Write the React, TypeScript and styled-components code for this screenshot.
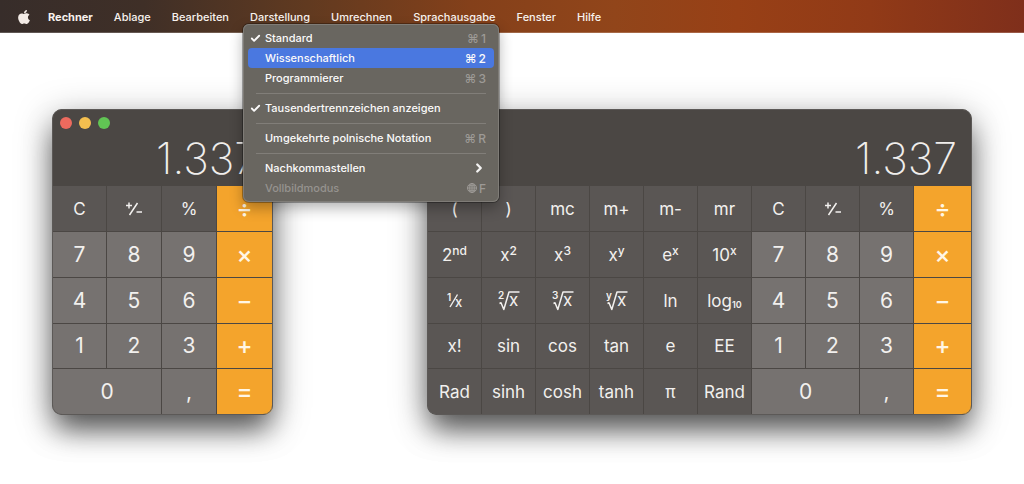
import React from 'react';
import styled, { createGlobalStyle } from 'styled-components';
import { FaApple } from 'react-icons/fa';
import { Check, ChevronRight } from 'lucide-react';

const GlobalStyle = createGlobalStyle`
  * { box-sizing: border-box; }
  body {
    margin: 0;
    background: #fff;
    font-family: Inter, "Liberation Sans", sans-serif;
  }
  button { font-family: inherit; border: 0; margin: 0; padding: 0; }
`;

const MenuBar = styled.nav`
  display: flex;
  align-items: center;
  height: 33px;
  padding-left: 18px;
  background: linear-gradient(90deg, #372d2a 0%, #3f2f27 14%, #613a20 30%, #84401a 46%, #91451a 60%, #984016 72%, #913a17 85%, #7f2f1b 100%);
  box-shadow: inset 0 -1px 0 rgba(255, 255, 255, 0.2);
`;

const BarList = styled.ul`
  display: flex;
  gap: 21px;
  margin: 0 0 0 18px;
  padding: 0;
  list-style: none;
`;

const BarItem = styled.li`
  position: relative;
`;

const BarButton = styled.button<{ $bold?: boolean }>`
  display: block;
  background: none;
  color: #f8f2ee;
  font-size: 11px;
  line-height: 16px;
  font-weight: ${(p) => (p.$bold ? 700 : 500)};
`;

const AppleLogo = styled(FaApple)`
  display: block;
  width: 12px;
  height: 16px;
  color: #f3ebe6;
`;

const Menu = styled.div`
  position: absolute;
  z-index: 2;
  top: 15px;
  left: -7px;
  width: 256px;
  padding: 4px 5px;
  border-radius: 6px;
  background: #696660;
  box-shadow: inset 0 0 0 1px #7f7c77, 0 0 0 1px rgba(0, 0, 0, 0.3), 0 6px 14px rgba(0, 0, 0, 0.3);
`;

const MenuRow = styled.button<{ $active?: boolean }>`
  display: grid;
  grid-template-columns: 17px 1fr auto;
  align-items: center;
  width: 100%;
  height: 20px;
  padding: 1px 8px 0 0;
  border-radius: 4px;
  background: ${(p) => (p.$active ? '#4a78e0' : 'transparent')};
  color: #fbfafa;
  font-size: 11px;
  font-weight: 500;
  line-height: 19px;
  text-align: left;
  &:disabled { color: #96938f; }
`;

const Mark = styled.span`
  display: flex;
  padding-left: 2px;
`;

const Shortcut = styled.span<{ $active?: boolean }>`
  display: flex;
  align-items: center;
  gap: 2px;
  font-size: 12px;
  color: ${(p) => (p.$active ? '#fbfafa' : '#9d9a96')};
`;

const Divider = styled.hr`
  height: 1px;
  margin: 5px 8px 4px;
  border: 0;
  background: #817e79;
`;

const Desktop = styled.main`
  display: grid;
  grid-template-columns: 221fr 545fr;
  gap: 154px;
  padding: 76px 52px 68px;
`;

const Window = styled.section`
  position: relative;
  padding: 1px;
  border-radius: 10px;
  background: #4b4744;
  box-shadow: 0 18px 28px -4px rgba(0, 0, 0, 0.55), 0 8px 36px rgba(0, 0, 0, 0.34);
  overflow: hidden;
  &::after {
    content: '';
    position: absolute;
    inset: 0;
    border: 1px solid rgba(95, 93, 90, 0.85);
    border-radius: 10px;
    pointer-events: none;
  }
`;

const Display = styled.header`
  display: flex;
  flex-direction: column;
  height: 76px;
  padding: 7px 14px 0 7px;
`;

const Lights = styled.div`
  display: flex;
  gap: 7px;
  height: 12px;
`;

const Light = styled.button<{ $color: string }>`
  width: 12px;
  height: 12px;
  border-radius: 50%;
  background: ${(p) => p.$color};
`;

const Value = styled.output`
  color: #f0eeec;
  font-size: 43px;
  line-height: 56px;
  margin-top: 1px;
  font-weight: 200;
  text-align: right;
`;

const Keys = styled.div<{ $wide?: boolean }>`
  display: grid;
  grid-template-columns: ${(p) => (p.$wide ? 'repeat(9, 53fr) 57fr' : '53fr 54fr 54fr 55fr')};
  grid-template-rows: 45px 45px 45px 44px 45px;
  gap: 1px;
`;

type Kind = 'fn' | 'num' | 'op';

const keyColors = { fn: '#5a5654', num: '#767270', op: '#f4a42c' };
const keySizes = { fn: 17, num: 21, op: 24 };

const Key = styled.button<{ $kind: Kind; $double?: boolean }>`
  display: flex;
  align-items: center;
  justify-content: center;
  grid-column: span ${(p) => (p.$double ? 2 : 1)};
  background: ${(p) => keyColors[p.$kind]};
  color: ${(p) => (p.$kind === 'op' ? '#fff6e6' : '#f2f0ee')};
  font-size: ${(p) => keySizes[p.$kind]}px;
  font-weight: ${(p) => (p.$kind === 'op' ? 500 : 400)};
  line-height: 24px;
  white-space: nowrap;
`;

const Sup = styled.sup`
  font-size: 12px;
  font-weight: 500;
  line-height: 12px;
  margin-bottom: 8px;
`;

const Sub = styled.sub`
  font-size: 9px;
  font-weight: 600;
  line-height: 12px;
  margin-top: 8px;
`;

const Sign = styled.svg`
  display: block;
  fill: currentColor;
  font-weight: 600;
  path { fill: none; stroke: currentColor; stroke-linejoin: round; }
`;

const Root = ({ index }: { index: string }) => (
  <Sign width="22" height="22" viewBox="0 0 22 22">
    <text x="0" y="9" fontSize="10">{index}</text>
    <path d="M1.5 13.5 L3 12.8 L5.8 19.5 L11 2 H21.5" strokeWidth="1.5" />
    <text x="11" y="16" fontSize="17" fontWeight="400">x</text>
  </Sign>
);

const Reciprocal = () => (
  <Sign width="18" height="18" viewBox="0 0 18 18">
    <text x="1" y="9" fontSize="10">1</text>
    <path d="M4 15 L11.5 2.5" strokeWidth="1.4" />
    <text x="9" y="15" fontSize="13" fontWeight="500">x</text>
  </Sign>
);

const PlusMinus = () => (
  <Sign width="18" height="18" viewBox="0 0 18 18">
    <path d="M1 5.5 H7 M4 2.5 V8.5 M4.5 15 L12.5 3 M11.5 12 H17" strokeWidth="1.5" />
  </Sign>
);

const GlobeIcon = () => (
  <svg width="10" height="10" viewBox="0 0 20 20" fill="none" stroke="currentColor" strokeWidth="2">
    <circle cx="10" cy="10" r="9" />
    <ellipse cx="10" cy="10" rx="4.5" ry="9" />
    <path d="M10 1 V19 M1 10 H19 M3 5.5 H17 M3 14.5 H17" />
  </svg>
);

interface KeySpec {
  id: string;
  kind: Kind;
  label?: React.ReactNode;
  double?: boolean;
}

const fn = (id: string, label?: React.ReactNode): KeySpec => ({ id, kind: 'fn', label });
const num = (id: string): KeySpec => ({ id, kind: 'num' });
const op = (id: string): KeySpec => ({ id, kind: 'op' });

const basicRows: KeySpec[][] = [
  [fn('C'), fn('plus-minus', <PlusMinus />), fn('%'), op('÷')],
  [num('7'), num('8'), num('9'), op('×')],
  [num('4'), num('5'), num('6'), op('−')],
  [num('1'), num('2'), num('3'), op('+')],
  [{ id: '0', kind: 'num', double: true }, num(','), op('=')],
];

const scienceRows: KeySpec[][] = [
  [fn('('), fn(')'), fn('mc'), fn('m+'), fn('m-'), fn('mr')],
  [
    fn('2nd', <>2<Sup>nd</Sup></>),
    fn('x2', <>x<Sup>2</Sup></>),
    fn('x3', <>x<Sup>3</Sup></>),
    fn('xy', <>x<Sup>y</Sup></>),
    fn('ex', <>e<Sup>x</Sup></>),
    fn('10x', <>10<Sup>x</Sup></>),
  ],
  [
    fn('1/x', <Reciprocal />),
    fn('root2', <Root index="2" />),
    fn('root3', <Root index="3" />),
    fn('rooty', <Root index="y" />),
    fn('ln'),
    fn('log10', <>log<Sub>10</Sub></>),
  ],
  [fn('x!'), fn('sin'), fn('cos'), fn('tan'), fn('e'), fn('EE')],
  [fn('Rad'), fn('sinh'), fn('cosh'), fn('tanh'), fn('π'), fn('Rand')],
];

const Calculator = ({ wide }: { wide?: boolean }) => {
  const rows = wide ? scienceRows.map((row, i) => [...row, ...basicRows[i]]) : basicRows;
  return (
    <Window>
      <Display>
        <Lights>
          {!wide && (
            <>
              <Light $color="#ec6a5e" aria-label="Schließen" />
              <Light $color="#f4bf4f" aria-label="Minimieren" />
              <Light $color="#61c554" aria-label="Zoomen" />
            </>
          )}
        </Lights>
        <Value>1.337</Value>
      </Display>
      <Keys $wide={wide}>
        {rows.flat().map((k) => (
          <Key key={k.id} $kind={k.kind} $double={k.double} aria-label={k.id}>
            {k.label ?? k.id}
          </Key>
        ))}
      </Keys>
    </Window>
  );
};

interface RowProps {
  label: string;
  keys?: React.ReactNode;
  checked?: boolean;
  active?: boolean;
  disabled?: boolean;
}

const Row = ({ label, keys, checked, active, disabled }: RowProps) => (
  <MenuRow $active={active} disabled={disabled}>
    <Mark>{checked && <Check size={11} strokeWidth={4} />}</Mark>
    <span>{label}</span>
    <Shortcut $active={active}>{keys}</Shortcut>
  </MenuRow>
);

const ViewMenu = () => (
  <Menu>
    <Row label="Standard" checked keys={<><span>⌘</span><span>1</span></>} />
    <Row label="Wissenschaftlich" active keys={<><span>⌘</span><span>2</span></>} />
    <Row label="Programmierer" keys={<><span>⌘</span><span>3</span></>} />
    <Divider />
    <Row label="Tausendertrennzeichen anzeigen" checked />
    <Divider />
    <Row label="Umgekehrte polnische Notation" keys={<><span>⌘</span><span>R</span></>} />
    <Divider />
    <Row label="Nachkommastellen" keys={<ChevronRight size={14} strokeWidth={4} color="#f4f3f2" />} />
    <Row label="Vollbildmodus" disabled keys={<><GlobeIcon /><span>F</span></>} />
  </Menu>
);

const barItems = ['Rechner', 'Ablage', 'Bearbeiten', 'Darstellung', 'Umrechnen', 'Sprachausgabe', 'Fenster', 'Hilfe'];

export default function App() {
  return (
    <>
      <GlobalStyle />
      <MenuBar>
        <AppleLogo />
        <BarList>
          {barItems.map((item, i) => (
            <BarItem key={item}>
              <BarButton $bold={i === 0}>{item}</BarButton>
              {item === 'Darstellung' && <ViewMenu />}
            </BarItem>
          ))}
        </BarList>
      </MenuBar>
      <Desktop>
        <Calculator />
        <Calculator wide />
      </Desktop>
    </>
  );
}
